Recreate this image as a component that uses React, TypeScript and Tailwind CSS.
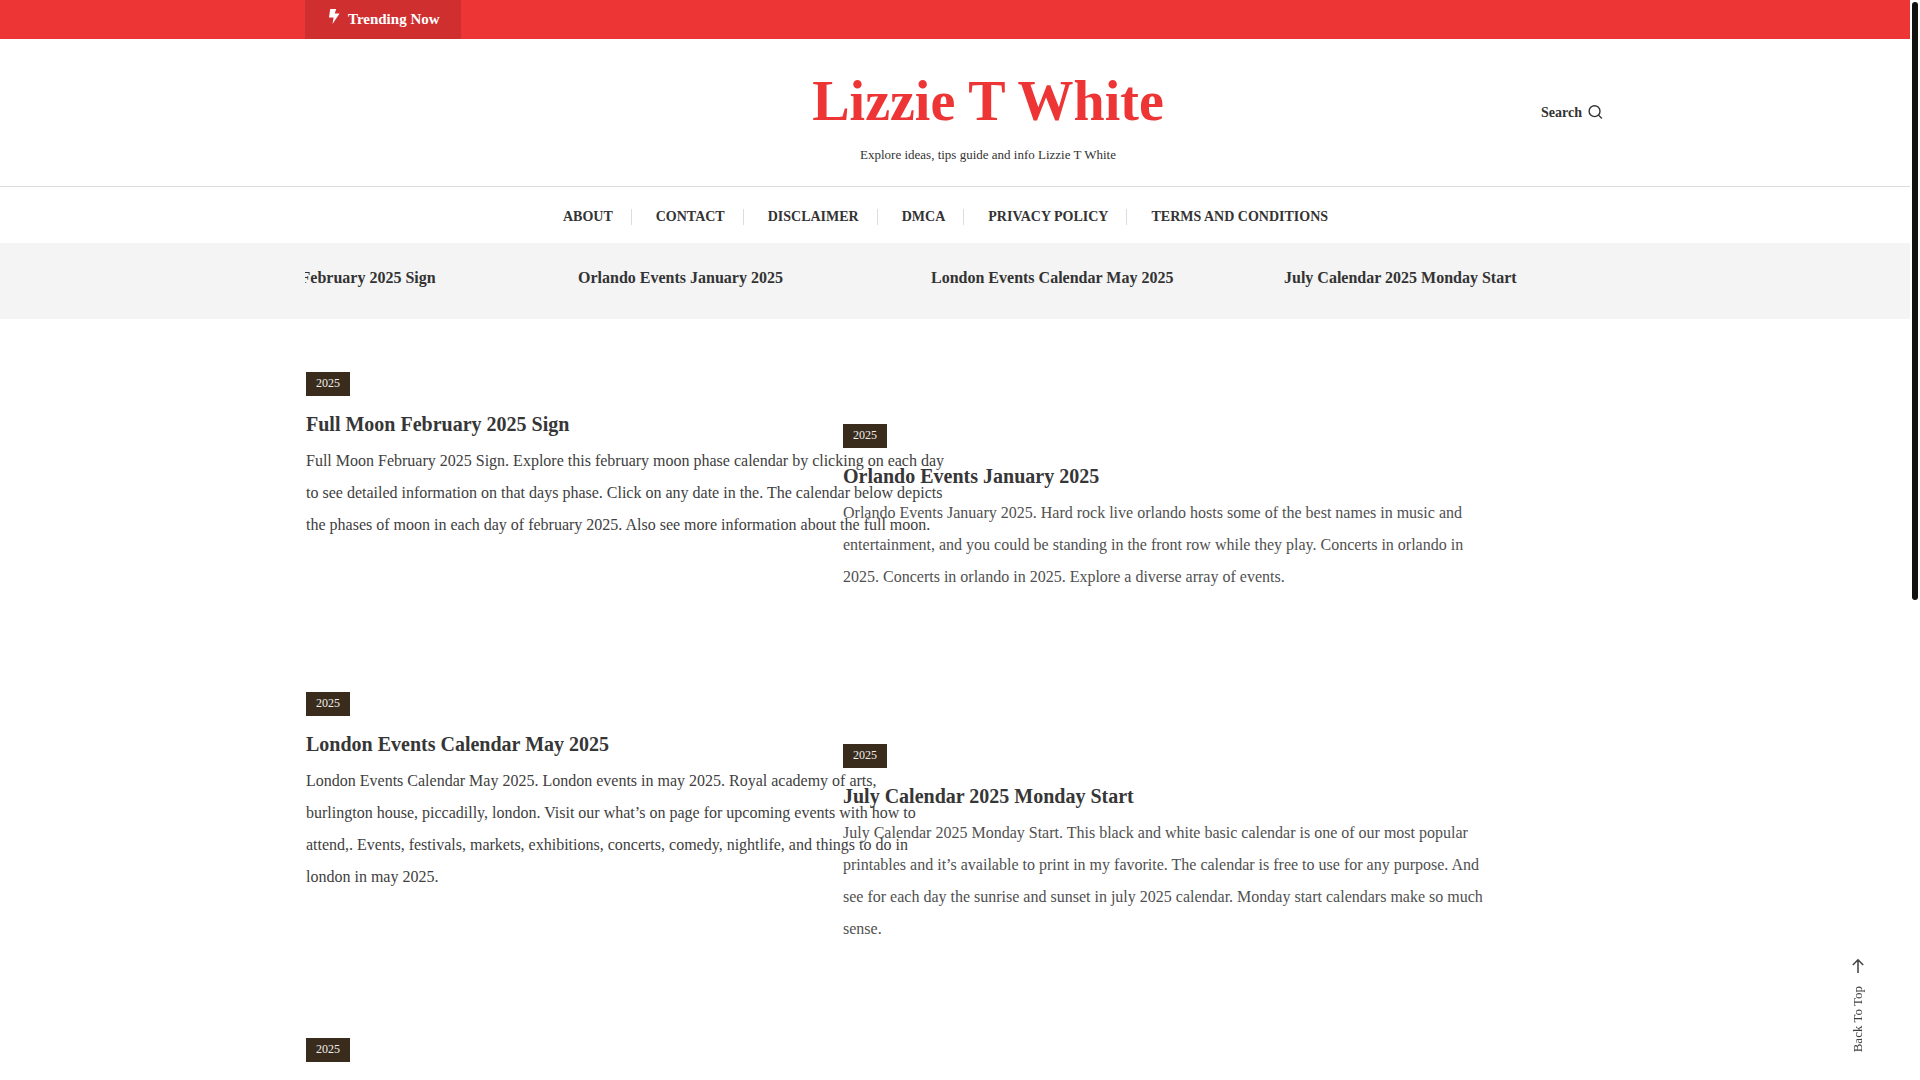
import React from "react";

interface Post {
    title: string;
    text: string;
}

const navItems = ["About", "Contact", "Disclaimer", "DMCA", "Privacy Policy", "Terms and Conditions"];

const posts: Post[] = [
    {
        title: "Full Moon February 2025 Sign",
        text: "Full Moon February 2025 Sign. Explore this february moon phase calendar by clicking on each day to see detailed information on that days phase. Click on any date in the. The calendar below depicts the phases of moon in each day of february 2025. Also see more information about the full moon.",
    },
    {
        title: "Orlando Events January 2025",
        text: "Orlando Events January 2025. Hard rock live orlando hosts some of the best names in music and entertainment, and you could be standing in the front row while they play. Concerts in orlando in 2025. Concerts in orlando in 2025. Explore a diverse array of events.",
    },
    {
        title: "London Events Calendar May 2025",
        text: "London Events Calendar May 2025. London events in may 2025. Royal academy of arts, burlington house, piccadilly, london. Visit our what’s on page for upcoming events with how to attend,. Events, festivals, markets, exhibitions, concerts, comedy, nightlife, and things to do in london in may 2025.",
    },
    {
        title: "July Calendar 2025 Monday Start",
        text: "July Calendar 2025 Monday Start. This black and white basic calendar is one of our most popular printables and it’s available to print in my favorite. The calendar is free to use for any purpose. And see for each day the sunrise and sunset in july 2025 calendar. Monday start calendars make so much sense.",
    },
];

function CategoryTag() {
    return (
        <a href="#2025" className="block w-[44px] h-6 bg-[#3a2c1c] text-[#eeeeee] text-xs leading-[22px] text-center">
            2025
        </a>
    );
}

// Each card is wider than its column, so neighbours overlap
function PostCard({ post, lowered }: { post: Post; lowered?: boolean }) {
    return (
        <article className={lowered ? "w-[648px] pt-[52px] text-[#505050]" : "w-[640px] text-[#404040]"}>
            <CategoryTag />
            <h2 className="mt-4 text-xl leading-6 font-bold text-[#363636]">
                <a href="#post">{post.title}</a>
            </h2>
            <p className="mt-[9px] text-base leading-8">{post.text}</p>
        </article>
    );
}

export default function App() {
    return (
        <div className="flex h-screen overflow-hidden bg-white text-[#333333] font-['Liberation_Serif',serif]">
            <div className="flex-1 min-w-0">
                {/* Top bar */}
                <div className="bg-[#ed3535]">
                    <div className="max-w-[1300px] mx-auto flex">
                        <div className="flex w-[156px] h-[39px] bg-[#cf2f2f] pl-6 text-white">
                            <svg className="w-[11px] h-[15px] mt-[9px]" viewBox="0 0 11 15" fill="currentColor">
                                <path d="M1.2 0H7.2L5.8 4.6H10.6L3.5 15L4.6 8.6H0Z" />
                            </svg>
                            <span className="ml-2 text-[15px] leading-[38px] font-bold whitespace-nowrap">Trending Now</span>
                        </div>
                    </div>
                </div>

                {/* Site header */}
                <header className="border-b border-[#dddddd]">
                    <div className="max-w-[1300px] h-[147px] mx-auto flex items-center">
                        <div className="flex-1 pt-2.5 pl-[130px] text-center">
                            <h1 className="text-[56px] leading-[64px] font-bold text-[#ed3535]">
                                <a href="#home">Lizzie T White</a>
                            </h1>
                            <p className="mt-2.5 text-[13px] leading-6">Explore ideas, tips guide and info Lizzie T White</p>
                        </div>
                        <button type="button" className="flex items-center gap-1.5 pr-0.5 text-sm font-bold">
                            Search
                            <svg className="w-[15px] h-[15px]" viewBox="0 0 16 16" fill="none" stroke="currentColor" strokeWidth="1.5">
                                <circle cx="7" cy="6.6" r="5.8" />
                                <path d="M11.2 10.8L14.8 14.4" />
                            </svg>
                        </button>
                    </div>
                </header>

                {/* Main menu */}
                <nav className="flex justify-center items-center h-14 pt-1 pr-[19px]">
                    {navItems.map((item, i) => (
                        <React.Fragment key={item}>
                            {i > 0 && <span className="w-px h-4 ml-[18px] mr-6 bg-[#dddddd]" />}
                            <a href="#page" className="text-sm font-bold uppercase">{item}</a>
                        </React.Fragment>
                    ))}
                </nav>

                {/* Headline ticker */}
                <section className="h-[76px] bg-[#f4f4f4]">
                    <div className="max-w-[1300px] mx-auto overflow-hidden">
                        <div className="flex -ml-20 pt-[23px]">
                            {posts.map((post) => (
                                <a key={post.title} href="#post" className="w-[353px] shrink-0 text-base leading-6 font-bold">
                                    {post.title}
                                </a>
                            ))}
                        </div>
                    </div>
                </section>

                {/* Posts */}
                <main className="max-w-[1300px] mx-auto pt-[53px] pl-px">
                    <div className="grid grid-cols-[537px_1fr] h-80">
                        <PostCard post={posts[0]} />
                        <PostCard post={posts[1]} lowered />
                    </div>
                    <div className="grid grid-cols-[537px_1fr] h-[346px]">
                        <PostCard post={posts[2]} />
                        <PostCard post={posts[3]} lowered />
                    </div>
                    <CategoryTag />
                </main>
            </div>

            {/* Scrollbar */}
            <div className="w-[10px] py-0.5 px-0.5">
                <div className="w-1.5 h-[598px] rounded-full bg-[#111111]" />
            </div>

            <a href="#top" className="fixed right-[52px] bottom-7 flex flex-col items-center gap-3 text-[#404040]">
                <svg className="w-4 h-4" viewBox="0 0 16 16" fill="none" stroke="currentColor" strokeWidth="1.5">
                    <path d="M8 15V2M2.8 7L8 1.8L13.2 7" />
                </svg>
                <span className="text-[13px] leading-5 [writing-mode:vertical-rl] rotate-180">Back To Top</span>
            </a>
        </div>
    );
}
